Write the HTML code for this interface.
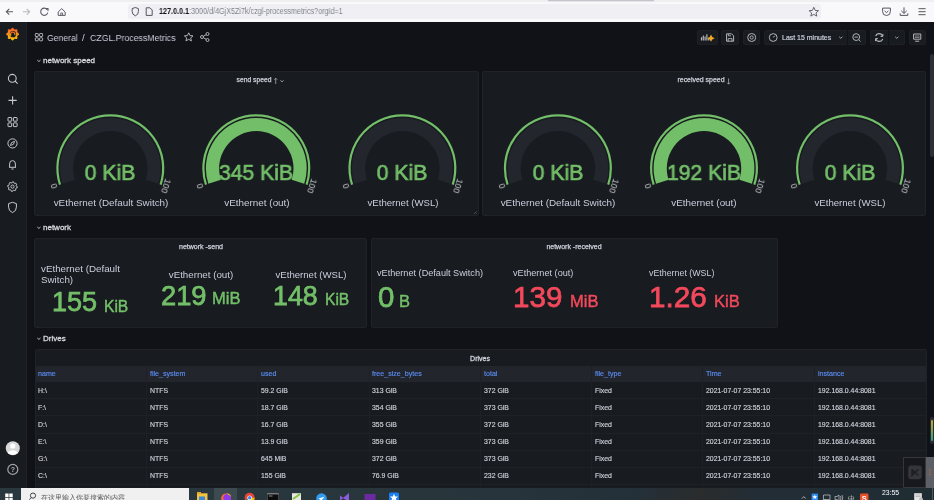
<!DOCTYPE html><html><head><meta charset="utf-8"><style>
html,body{margin:0;padding:0;width:934px;height:500px;overflow:hidden;background:#111217;}
body{position:relative;font-family:"Liberation Sans", sans-serif;}
.t{position:absolute;white-space:nowrap;will-change:transform;}
.r{position:absolute;}
svg.ov{position:absolute;left:0;top:0;}
</style></head><body><div class="r" style="left:0px;top:0px;width:934px;height:22px;background:#f9f9fb;"></div>
<div class="r" style="left:0px;top:0px;width:934px;height:2px;background:#efeff2;"></div>
<div class="r" style="left:548.2px;top:0px;width:106px;height:1px;background:#c4c4cc;box-shadow:0 0.5px 1px #d8d8de;"></div>
<div class="r" style="left:128px;top:3.6px;width:693px;height:15.8px;background:#f0f0f4;border-radius:3px;"></div>
<div class="t" style="left:158.50px;top:6.84px;font-size:8.7px;line-height:8.7px;color:#15141a;font-weight:400;transform:scaleX(0.828);transform-origin:0 0;"><span style="color:#15141a;font-weight:700">127.0.0.1</span><span style="color:#80808c">:3000/d/4GjX5Zi7k/czgl-processmetrics?orgId=1</span></div>
<div class="r" style="left:0px;top:22px;width:934px;height:478px;background:#111217;"></div>
<div class="r" style="left:0px;top:22px;width:26px;height:478px;background:#181b1f;"></div>
<div class="r" style="left:26px;top:22px;width:0.8px;height:478px;background:#202226;"></div>
<div class="t" style="left:-587.20px;width:1200px;text-align:center;top:466.47px;font-size:7px;line-height:7px;color:#b0b1b8;font-weight:700;">?</div>
<div class="t" style="left:47.30px;top:32.69px;font-size:9.7px;line-height:9.7px;color:#ccccdc;font-weight:400;transform:scaleX(0.89);transform-origin:0 0;">General</div>
<div class="t" style="left:82.30px;top:32.69px;font-size:9.7px;line-height:9.7px;color:#ccccdc;font-weight:400;">/</div>
<div class="t" style="left:90.00px;top:32.69px;font-size:9.7px;line-height:9.7px;color:#ccccdc;font-weight:400;transform:scaleX(0.902);transform-origin:0 0;">CZGL.ProcessMetrics</div>
<div class="r" style="left:697px;top:29.8px;width:20.600000000000023px;height:15.400000000000002px;background:#181b1f;border:1px solid #1d2025;box-sizing:border-box;border-radius:2px;"></div>
<div class="r" style="left:721.2px;top:29.8px;width:17.59999999999991px;height:15.400000000000002px;background:#181b1f;border:1px solid #1d2025;box-sizing:border-box;border-radius:2px;"></div>
<div class="r" style="left:743px;top:29.8px;width:17.399999999999977px;height:15.400000000000002px;background:#181b1f;border:1px solid #1d2025;box-sizing:border-box;border-radius:2px;"></div>
<div class="r" style="left:764.2px;top:29.8px;width:101.59999999999991px;height:15.400000000000002px;background:#181b1f;border:1px solid #1d2025;box-sizing:border-box;border-radius:2px;"></div>
<div class="r" style="left:870.2px;top:29.8px;width:34.69999999999993px;height:15.400000000000002px;background:#181b1f;border:1px solid #1d2025;box-sizing:border-box;border-radius:2px;"></div>
<div class="r" style="left:908.6px;top:29.8px;width:17.100000000000023px;height:15.400000000000002px;background:#181b1f;border:1px solid #1d2025;box-sizing:border-box;border-radius:2px;"></div>
<div class="r" style="left:847.3px;top:29.8px;width:0.8px;height:15.4px;background:#111217;"></div>
<div class="r" style="left:888.4px;top:29.8px;width:0.8px;height:15.4px;background:#111217;"></div>
<div class="t" style="left:782.00px;top:34.49px;font-size:6.98px;line-height:6.98px;color:#ccccdc;font-weight:400;-webkit-text-stroke:0.2px #ccccdc;">Last 15 minutes</div>
<div class="r" style="left:929.8px;top:54.2px;width:4.2px;height:103px;background:#2d2f34;border-radius:2px;"></div>
<div class="t" style="left:42.50px;top:56.93px;font-size:8.0px;line-height:8.0px;color:#d8d9e0;font-weight:400;-webkit-text-stroke:0.3px #d8d9e0;">network speed</div>
<div class="t" style="left:42.50px;top:223.83px;font-size:8.0px;line-height:8.0px;color:#d8d9e0;font-weight:400;-webkit-text-stroke:0.3px #d8d9e0;">network</div>
<div class="t" style="left:42.50px;top:334.83px;font-size:8.0px;line-height:8.0px;color:#d8d9e0;font-weight:400;-webkit-text-stroke:0.3px #d8d9e0;">Drives</div>
<div class="r" style="left:34.3px;top:71px;width:444.8px;height:144.7px;background:#181b1f;border:1px solid #202226;box-sizing:border-box;border-radius:2px;"></div>
<div class="r" style="left:482.2px;top:71px;width:444px;height:144.7px;background:#181b1f;border:1px solid #202226;box-sizing:border-box;border-radius:2px;"></div>
<div class="t" style="left:-346.40px;width:1200px;text-align:center;top:77.29px;font-size:6.75px;line-height:6.75px;color:#d0d0dc;font-weight:400;-webkit-text-stroke:0.25px #d0d0dc;">send speed</div>
<div class="t" style="left:101.30px;width:1200px;text-align:center;top:77.12px;font-size:6.95px;line-height:6.95px;color:#d0d0dc;font-weight:400;-webkit-text-stroke:0.25px #d0d0dc;">received speed</div>
<div class="t" style="left:-489.70px;width:1200px;text-align:center;top:162.01px;font-size:22.2px;line-height:22.2px;color:#73bf69;font-weight:400;-webkit-text-stroke:0.7px #73bf69;transform:scaleX(0.955);">0 KiB</div>
<div class="t" style="left:-489.50px;width:1200px;text-align:center;top:197.64px;font-size:9.88px;line-height:9.88px;color:#ccccdc;font-weight:400;">vEthernet (Default Switch)</div>
<div class="t" style="left:34.38px;top:181.47px;width:40px;height:10px;line-height:10px;text-align:center;font-size:8.8px;color:#c4c5cc;transform:rotate(-108deg);">0</div>
<div class="t" style="left:146.22px;top:181.47px;width:40px;height:10px;line-height:10px;text-align:center;font-size:8.8px;color:#c4c5cc;transform:rotate(108deg);">100</div>
<div class="t" style="left:-343.70px;width:1200px;text-align:center;top:162.01px;font-size:22.2px;line-height:22.2px;color:#73bf69;font-weight:400;-webkit-text-stroke:0.7px #73bf69;transform:scaleX(0.955);">345 KiB</div>
<div class="t" style="left:-343.50px;width:1200px;text-align:center;top:197.64px;font-size:9.88px;line-height:9.88px;color:#ccccdc;font-weight:400;">vEthernet (out)</div>
<div class="t" style="left:180.38px;top:181.47px;width:40px;height:10px;line-height:10px;text-align:center;font-size:8.8px;color:#c4c5cc;transform:rotate(-108deg);">0</div>
<div class="t" style="left:292.22px;top:181.47px;width:40px;height:10px;line-height:10px;text-align:center;font-size:8.8px;color:#c4c5cc;transform:rotate(108deg);">100</div>
<div class="t" style="left:-197.60px;width:1200px;text-align:center;top:162.01px;font-size:22.2px;line-height:22.2px;color:#73bf69;font-weight:400;-webkit-text-stroke:0.7px #73bf69;transform:scaleX(0.955);">0 KiB</div>
<div class="t" style="left:-197.40px;width:1200px;text-align:center;top:197.87px;font-size:9.6px;line-height:9.6px;color:#ccccdc;font-weight:400;">vEthernet (WSL)</div>
<div class="t" style="left:326.48px;top:181.47px;width:40px;height:10px;line-height:10px;text-align:center;font-size:8.8px;color:#c4c5cc;transform:rotate(-108deg);">0</div>
<div class="t" style="left:438.32px;top:181.47px;width:40px;height:10px;line-height:10px;text-align:center;font-size:8.8px;color:#c4c5cc;transform:rotate(108deg);">100</div>
<div class="t" style="left:-42.10px;width:1200px;text-align:center;top:162.01px;font-size:22.2px;line-height:22.2px;color:#73bf69;font-weight:400;-webkit-text-stroke:0.7px #73bf69;transform:scaleX(0.955);">0 KiB</div>
<div class="t" style="left:-41.90px;width:1200px;text-align:center;top:197.64px;font-size:9.88px;line-height:9.88px;color:#ccccdc;font-weight:400;">vEthernet (Default Switch)</div>
<div class="t" style="left:481.98px;top:181.47px;width:40px;height:10px;line-height:10px;text-align:center;font-size:8.8px;color:#c4c5cc;transform:rotate(-108deg);">0</div>
<div class="t" style="left:593.82px;top:181.47px;width:40px;height:10px;line-height:10px;text-align:center;font-size:8.8px;color:#c4c5cc;transform:rotate(108deg);">100</div>
<div class="t" style="left:104.00px;width:1200px;text-align:center;top:162.01px;font-size:22.2px;line-height:22.2px;color:#73bf69;font-weight:400;-webkit-text-stroke:0.7px #73bf69;transform:scaleX(0.955);">192 KiB</div>
<div class="t" style="left:104.20px;width:1200px;text-align:center;top:197.64px;font-size:9.88px;line-height:9.88px;color:#ccccdc;font-weight:400;">vEthernet (out)</div>
<div class="t" style="left:628.08px;top:181.47px;width:40px;height:10px;line-height:10px;text-align:center;font-size:8.8px;color:#c4c5cc;transform:rotate(-108deg);">0</div>
<div class="t" style="left:739.92px;top:181.47px;width:40px;height:10px;line-height:10px;text-align:center;font-size:8.8px;color:#c4c5cc;transform:rotate(108deg);">100</div>
<div class="t" style="left:250.00px;width:1200px;text-align:center;top:162.01px;font-size:22.2px;line-height:22.2px;color:#73bf69;font-weight:400;-webkit-text-stroke:0.7px #73bf69;transform:scaleX(0.955);">0 KiB</div>
<div class="t" style="left:250.20px;width:1200px;text-align:center;top:197.87px;font-size:9.6px;line-height:9.6px;color:#ccccdc;font-weight:400;">vEthernet (WSL)</div>
<div class="t" style="left:774.08px;top:181.47px;width:40px;height:10px;line-height:10px;text-align:center;font-size:8.8px;color:#c4c5cc;transform:rotate(-108deg);">0</div>
<div class="t" style="left:885.92px;top:181.47px;width:40px;height:10px;line-height:10px;text-align:center;font-size:8.8px;color:#c4c5cc;transform:rotate(108deg);">100</div>
<div class="r" style="left:34.3px;top:237.8px;width:332.5px;height:89.8px;background:#181b1f;border:1px solid #202226;box-sizing:border-box;border-radius:2px;"></div>
<div class="r" style="left:370.6px;top:237.8px;width:407.6px;height:89.8px;background:#181b1f;border:1px solid #202226;box-sizing:border-box;border-radius:2px;"></div>
<div class="t" style="left:-399.50px;width:1200px;text-align:center;top:243.37px;font-size:7.0px;line-height:7.0px;color:#d0d0dc;font-weight:400;-webkit-text-stroke:0.25px #d0d0dc;">network -send</div>
<div class="t" style="left:-26.20px;width:1200px;text-align:center;top:243.37px;font-size:7.0px;line-height:7.0px;color:#d0d0dc;font-weight:400;-webkit-text-stroke:0.25px #d0d0dc;">network -received</div>
<div class="t" style="left:40.80px;top:263.80px;font-size:9.8px;line-height:9.8px;color:#ccccdc;font-weight:400;">vEthernet (Default</div>
<div class="t" style="left:40.80px;top:275.10px;font-size:9.8px;line-height:9.8px;color:#ccccdc;font-weight:400;">Switch)</div>
<div class="t" style="left:51.90px;top:289.04px;font-size:27px;line-height:27px;color:#73bf69;font-weight:400;-webkit-text-stroke:0.75px #73bf69;">155</div>
<div class="t" style="left:103.60px;top:298.69px;font-size:15.6px;line-height:15.6px;color:#73bf69;font-weight:400;-webkit-text-stroke:0.45px #73bf69;">KiB</div>
<div class="t" style="left:-399.40px;width:1200px;text-align:center;top:269.95px;font-size:9.75px;line-height:9.75px;color:#ccccdc;font-weight:400;">vEthernet (out)</div>
<div class="t" style="left:161.00px;top:282.49px;font-size:27.3px;line-height:27.3px;color:#73bf69;font-weight:400;-webkit-text-stroke:0.75px #73bf69;">219</div>
<div class="t" style="left:211.70px;top:291.29px;font-size:16.55px;line-height:16.55px;color:#73bf69;font-weight:400;-webkit-text-stroke:0.45px #73bf69;">MiB</div>
<div class="t" style="left:-288.60px;width:1200px;text-align:center;top:270.07px;font-size:9.6px;line-height:9.6px;color:#ccccdc;font-weight:400;">vEthernet (WSL)</div>
<div class="t" style="left:273.40px;top:282.91px;font-size:26.8px;line-height:26.8px;color:#73bf69;font-weight:400;-webkit-text-stroke:0.75px #73bf69;">148</div>
<div class="t" style="left:324.80px;top:292.09px;font-size:15.6px;line-height:15.6px;color:#73bf69;font-weight:400;-webkit-text-stroke:0.45px #73bf69;">KiB</div>
<div class="t" style="left:377.00px;top:268.87px;font-size:9.13px;line-height:9.13px;color:#ccccdc;font-weight:400;">vEthernet (Default Switch)</div>
<div class="t" style="left:378.20px;top:282.11px;font-size:29.4px;line-height:29.4px;color:#73bf69;font-weight:400;-webkit-text-stroke:0.75px #73bf69;">0</div>
<div class="t" style="left:399.40px;top:293.03px;font-size:16.5px;line-height:16.5px;color:#73bf69;font-weight:400;-webkit-text-stroke:0.45px #73bf69;">B</div>
<div class="t" style="left:513.00px;top:268.87px;font-size:9.13px;line-height:9.13px;color:#ccccdc;font-weight:400;">vEthernet (out)</div>
<div class="t" style="left:513.00px;top:281.94px;font-size:29.6px;line-height:29.6px;color:#f2495c;font-weight:400;-webkit-text-stroke:0.75px #f2495c;">139</div>
<div class="t" style="left:569.80px;top:293.03px;font-size:16.5px;line-height:16.5px;color:#f2495c;font-weight:400;-webkit-text-stroke:0.45px #f2495c;">MiB</div>
<div class="t" style="left:649.00px;top:269.11px;font-size:8.85px;line-height:8.85px;color:#ccccdc;font-weight:400;">vEthernet (WSL)</div>
<div class="t" style="left:649.20px;top:281.86px;font-size:29.7px;line-height:29.7px;color:#f2495c;font-weight:400;-webkit-text-stroke:0.75px #f2495c;">1.26</div>
<div class="t" style="left:713.80px;top:293.03px;font-size:16.5px;line-height:16.5px;color:#f2495c;font-weight:400;-webkit-text-stroke:0.45px #f2495c;">KiB</div>
<div class="r" style="left:34.5px;top:349.2px;width:892px;height:150px;background:#181b1f;border:1px solid #202226;box-sizing:border-box;border-radius:2px;"></div>
<div class="t" style="left:-119.80px;width:1200px;text-align:center;top:354.97px;font-size:7.0px;line-height:7.0px;color:#d0d0dc;font-weight:400;-webkit-text-stroke:0.3px #d0d0dc;">Drives</div>
<div class="r" style="left:35.5px;top:366px;width:890px;height:16.2px;background:#22252c;"></div>
<div class="r" style="left:145.9px;top:366px;width:0.8px;height:121px;background:#1e2025;"></div>
<div class="r" style="left:257.2px;top:366px;width:0.8px;height:121px;background:#1e2025;"></div>
<div class="r" style="left:368.5px;top:366px;width:0.8px;height:121px;background:#1e2025;"></div>
<div class="r" style="left:479.8px;top:366px;width:0.8px;height:121px;background:#1e2025;"></div>
<div class="r" style="left:591.1px;top:366px;width:0.8px;height:121px;background:#1e2025;"></div>
<div class="r" style="left:702.4px;top:366px;width:0.8px;height:121px;background:#1e2025;"></div>
<div class="r" style="left:813.7px;top:366px;width:0.8px;height:121px;background:#1e2025;"></div>
<div class="t" style="left:38.40px;top:371.19px;font-size:7.1px;line-height:7.1px;color:#5b8cf0;font-weight:400;-webkit-text-stroke:0.15px #5b8cf0;">name</div>
<div class="t" style="left:149.70px;top:371.19px;font-size:7.1px;line-height:7.1px;color:#5b8cf0;font-weight:400;-webkit-text-stroke:0.15px #5b8cf0;">file_system</div>
<div class="t" style="left:261.00px;top:371.19px;font-size:7.1px;line-height:7.1px;color:#5b8cf0;font-weight:400;-webkit-text-stroke:0.15px #5b8cf0;">used</div>
<div class="t" style="left:372.30px;top:371.19px;font-size:7.1px;line-height:7.1px;color:#5b8cf0;font-weight:400;-webkit-text-stroke:0.15px #5b8cf0;">free_size_bytes</div>
<div class="t" style="left:483.60px;top:371.19px;font-size:7.1px;line-height:7.1px;color:#5b8cf0;font-weight:400;-webkit-text-stroke:0.15px #5b8cf0;">total</div>
<div class="t" style="left:594.90px;top:371.19px;font-size:7.1px;line-height:7.1px;color:#5b8cf0;font-weight:400;-webkit-text-stroke:0.15px #5b8cf0;">file_type</div>
<div class="t" style="left:706.20px;top:371.19px;font-size:7.1px;line-height:7.1px;color:#5b8cf0;font-weight:400;-webkit-text-stroke:0.15px #5b8cf0;">Time</div>
<div class="t" style="left:817.50px;top:371.19px;font-size:7.1px;line-height:7.1px;color:#5b8cf0;font-weight:400;-webkit-text-stroke:0.15px #5b8cf0;">instance</div>
<div class="r" style="left:35.5px;top:398.3px;width:890px;height:0.8px;background:#1f2126;"></div>
<div class="t" style="left:38.40px;top:387.76px;font-size:6.9px;line-height:6.9px;color:#d0d0dc;font-weight:400;-webkit-text-stroke:0.15px #d0d0dc;">H:\</div>
<div class="t" style="left:149.70px;top:387.76px;font-size:6.9px;line-height:6.9px;color:#d0d0dc;font-weight:400;-webkit-text-stroke:0.15px #d0d0dc;">NTFS</div>
<div class="t" style="left:261.00px;top:387.76px;font-size:6.9px;line-height:6.9px;color:#d0d0dc;font-weight:400;-webkit-text-stroke:0.15px #d0d0dc;">59.2 GiB</div>
<div class="t" style="left:372.30px;top:387.76px;font-size:6.9px;line-height:6.9px;color:#d0d0dc;font-weight:400;-webkit-text-stroke:0.15px #d0d0dc;">313 GiB</div>
<div class="t" style="left:483.60px;top:387.76px;font-size:6.9px;line-height:6.9px;color:#d0d0dc;font-weight:400;-webkit-text-stroke:0.15px #d0d0dc;">372 GiB</div>
<div class="t" style="left:594.90px;top:387.76px;font-size:6.9px;line-height:6.9px;color:#d0d0dc;font-weight:400;-webkit-text-stroke:0.15px #d0d0dc;">Fixed</div>
<div class="t" style="left:706.20px;top:387.76px;font-size:6.9px;line-height:6.9px;color:#d0d0dc;font-weight:400;-webkit-text-stroke:0.15px #d0d0dc;">2021-07-07 23:55:10</div>
<div class="t" style="left:817.50px;top:387.76px;font-size:6.9px;line-height:6.9px;color:#d0d0dc;font-weight:400;-webkit-text-stroke:0.15px #d0d0dc;">192.168.0.44:8081</div>
<div class="r" style="left:35.5px;top:415.40000000000003px;width:890px;height:0.8px;background:#1f2126;"></div>
<div class="t" style="left:38.40px;top:404.86px;font-size:6.9px;line-height:6.9px;color:#d0d0dc;font-weight:400;-webkit-text-stroke:0.15px #d0d0dc;">F:\</div>
<div class="t" style="left:149.70px;top:404.86px;font-size:6.9px;line-height:6.9px;color:#d0d0dc;font-weight:400;-webkit-text-stroke:0.15px #d0d0dc;">NTFS</div>
<div class="t" style="left:261.00px;top:404.86px;font-size:6.9px;line-height:6.9px;color:#d0d0dc;font-weight:400;-webkit-text-stroke:0.15px #d0d0dc;">18.7 GiB</div>
<div class="t" style="left:372.30px;top:404.86px;font-size:6.9px;line-height:6.9px;color:#d0d0dc;font-weight:400;-webkit-text-stroke:0.15px #d0d0dc;">354 GiB</div>
<div class="t" style="left:483.60px;top:404.86px;font-size:6.9px;line-height:6.9px;color:#d0d0dc;font-weight:400;-webkit-text-stroke:0.15px #d0d0dc;">373 GiB</div>
<div class="t" style="left:594.90px;top:404.86px;font-size:6.9px;line-height:6.9px;color:#d0d0dc;font-weight:400;-webkit-text-stroke:0.15px #d0d0dc;">Fixed</div>
<div class="t" style="left:706.20px;top:404.86px;font-size:6.9px;line-height:6.9px;color:#d0d0dc;font-weight:400;-webkit-text-stroke:0.15px #d0d0dc;">2021-07-07 23:55:10</div>
<div class="t" style="left:817.50px;top:404.86px;font-size:6.9px;line-height:6.9px;color:#d0d0dc;font-weight:400;-webkit-text-stroke:0.15px #d0d0dc;">192.168.0.44:8081</div>
<div class="r" style="left:35.5px;top:432.5px;width:890px;height:0.8px;background:#1f2126;"></div>
<div class="t" style="left:38.40px;top:421.96px;font-size:6.9px;line-height:6.9px;color:#d0d0dc;font-weight:400;-webkit-text-stroke:0.15px #d0d0dc;">D:\</div>
<div class="t" style="left:149.70px;top:421.96px;font-size:6.9px;line-height:6.9px;color:#d0d0dc;font-weight:400;-webkit-text-stroke:0.15px #d0d0dc;">NTFS</div>
<div class="t" style="left:261.00px;top:421.96px;font-size:6.9px;line-height:6.9px;color:#d0d0dc;font-weight:400;-webkit-text-stroke:0.15px #d0d0dc;">16.7 GiB</div>
<div class="t" style="left:372.30px;top:421.96px;font-size:6.9px;line-height:6.9px;color:#d0d0dc;font-weight:400;-webkit-text-stroke:0.15px #d0d0dc;">355 GiB</div>
<div class="t" style="left:483.60px;top:421.96px;font-size:6.9px;line-height:6.9px;color:#d0d0dc;font-weight:400;-webkit-text-stroke:0.15px #d0d0dc;">372 GiB</div>
<div class="t" style="left:594.90px;top:421.96px;font-size:6.9px;line-height:6.9px;color:#d0d0dc;font-weight:400;-webkit-text-stroke:0.15px #d0d0dc;">Fixed</div>
<div class="t" style="left:706.20px;top:421.96px;font-size:6.9px;line-height:6.9px;color:#d0d0dc;font-weight:400;-webkit-text-stroke:0.15px #d0d0dc;">2021-07-07 23:55:10</div>
<div class="t" style="left:817.50px;top:421.96px;font-size:6.9px;line-height:6.9px;color:#d0d0dc;font-weight:400;-webkit-text-stroke:0.15px #d0d0dc;">192.168.0.44:8081</div>
<div class="r" style="left:35.5px;top:449.6px;width:890px;height:0.8px;background:#1f2126;"></div>
<div class="t" style="left:38.40px;top:439.06px;font-size:6.9px;line-height:6.9px;color:#d0d0dc;font-weight:400;-webkit-text-stroke:0.15px #d0d0dc;">E:\</div>
<div class="t" style="left:149.70px;top:439.06px;font-size:6.9px;line-height:6.9px;color:#d0d0dc;font-weight:400;-webkit-text-stroke:0.15px #d0d0dc;">NTFS</div>
<div class="t" style="left:261.00px;top:439.06px;font-size:6.9px;line-height:6.9px;color:#d0d0dc;font-weight:400;-webkit-text-stroke:0.15px #d0d0dc;">13.9 GiB</div>
<div class="t" style="left:372.30px;top:439.06px;font-size:6.9px;line-height:6.9px;color:#d0d0dc;font-weight:400;-webkit-text-stroke:0.15px #d0d0dc;">359 GiB</div>
<div class="t" style="left:483.60px;top:439.06px;font-size:6.9px;line-height:6.9px;color:#d0d0dc;font-weight:400;-webkit-text-stroke:0.15px #d0d0dc;">373 GiB</div>
<div class="t" style="left:594.90px;top:439.06px;font-size:6.9px;line-height:6.9px;color:#d0d0dc;font-weight:400;-webkit-text-stroke:0.15px #d0d0dc;">Fixed</div>
<div class="t" style="left:706.20px;top:439.06px;font-size:6.9px;line-height:6.9px;color:#d0d0dc;font-weight:400;-webkit-text-stroke:0.15px #d0d0dc;">2021-07-07 23:55:10</div>
<div class="t" style="left:817.50px;top:439.06px;font-size:6.9px;line-height:6.9px;color:#d0d0dc;font-weight:400;-webkit-text-stroke:0.15px #d0d0dc;">192.168.0.44:8081</div>
<div class="r" style="left:35.5px;top:466.7px;width:890px;height:0.8px;background:#1f2126;"></div>
<div class="t" style="left:38.40px;top:456.16px;font-size:6.9px;line-height:6.9px;color:#d0d0dc;font-weight:400;-webkit-text-stroke:0.15px #d0d0dc;">G:\</div>
<div class="t" style="left:149.70px;top:456.16px;font-size:6.9px;line-height:6.9px;color:#d0d0dc;font-weight:400;-webkit-text-stroke:0.15px #d0d0dc;">NTFS</div>
<div class="t" style="left:261.00px;top:456.16px;font-size:6.9px;line-height:6.9px;color:#d0d0dc;font-weight:400;-webkit-text-stroke:0.15px #d0d0dc;">645 MiB</div>
<div class="t" style="left:372.30px;top:456.16px;font-size:6.9px;line-height:6.9px;color:#d0d0dc;font-weight:400;-webkit-text-stroke:0.15px #d0d0dc;">372 GiB</div>
<div class="t" style="left:483.60px;top:456.16px;font-size:6.9px;line-height:6.9px;color:#d0d0dc;font-weight:400;-webkit-text-stroke:0.15px #d0d0dc;">373 GiB</div>
<div class="t" style="left:594.90px;top:456.16px;font-size:6.9px;line-height:6.9px;color:#d0d0dc;font-weight:400;-webkit-text-stroke:0.15px #d0d0dc;">Fixed</div>
<div class="t" style="left:706.20px;top:456.16px;font-size:6.9px;line-height:6.9px;color:#d0d0dc;font-weight:400;-webkit-text-stroke:0.15px #d0d0dc;">2021-07-07 23:55:10</div>
<div class="t" style="left:817.50px;top:456.16px;font-size:6.9px;line-height:6.9px;color:#d0d0dc;font-weight:400;-webkit-text-stroke:0.15px #d0d0dc;">192.168.0.44:8081</div>
<div class="r" style="left:35.5px;top:483.8px;width:890px;height:0.8px;background:#1f2126;"></div>
<div class="t" style="left:38.40px;top:473.26px;font-size:6.9px;line-height:6.9px;color:#d0d0dc;font-weight:400;-webkit-text-stroke:0.15px #d0d0dc;">C:\</div>
<div class="t" style="left:149.70px;top:473.26px;font-size:6.9px;line-height:6.9px;color:#d0d0dc;font-weight:400;-webkit-text-stroke:0.15px #d0d0dc;">NTFS</div>
<div class="t" style="left:261.00px;top:473.26px;font-size:6.9px;line-height:6.9px;color:#d0d0dc;font-weight:400;-webkit-text-stroke:0.15px #d0d0dc;">155 GiB</div>
<div class="t" style="left:372.30px;top:473.26px;font-size:6.9px;line-height:6.9px;color:#d0d0dc;font-weight:400;-webkit-text-stroke:0.15px #d0d0dc;">76.9 GiB</div>
<div class="t" style="left:483.60px;top:473.26px;font-size:6.9px;line-height:6.9px;color:#d0d0dc;font-weight:400;-webkit-text-stroke:0.15px #d0d0dc;">232 GiB</div>
<div class="t" style="left:594.90px;top:473.26px;font-size:6.9px;line-height:6.9px;color:#d0d0dc;font-weight:400;-webkit-text-stroke:0.15px #d0d0dc;">Fixed</div>
<div class="t" style="left:706.20px;top:473.26px;font-size:6.9px;line-height:6.9px;color:#d0d0dc;font-weight:400;-webkit-text-stroke:0.15px #d0d0dc;">2021-07-07 23:55:10</div>
<div class="t" style="left:817.50px;top:473.26px;font-size:6.9px;line-height:6.9px;color:#d0d0dc;font-weight:400;-webkit-text-stroke:0.15px #d0d0dc;">192.168.0.44:8081</div>
<div class="r" style="left:903px;top:457.2px;width:23px;height:30.5px;background:#16181d;border:1px solid #34363c;box-sizing:border-box;"></div>
<div class="r" style="left:926px;top:457.2px;width:8px;height:30.5px;background:#5d5e66;"></div>
<div class="r" style="left:929.7px;top:416.8px;width:4.3px;height:27.1px;background:#2a2d35;border-radius:2px;"></div>
<div class="r" style="left:931.3px;top:420px;width:1.8px;height:21px;background:linear-gradient(#c8a838,#7aa848,#2aa088);border-radius:1px;"></div>
<div class="r" style="left:0px;top:487.5px;width:934px;height:12.5px;background:linear-gradient(90deg,#29373f 0%,#28363c 45%,#243039 68%,#2a2c2c 75%,#232d36 81%,#1f2d33 100%);"></div>
<div class="r" style="left:931.5px;top:487.5px;width:0.6px;height:12.5px;background:#4a5a60;"></div>
<div class="r" style="left:21.2px;top:487.5px;width:167.5px;height:12.5px;background:#f0f0f0;"></div>
<div class="t" style="left:41.00px;top:494.24px;font-size:7.4px;line-height:7.4px;color:#555555;font-weight:400;">在这里输入你要搜索的内容</div>
<div class="r" style="left:214.2px;top:487.5px;width:23.2px;height:12.5px;background:#3d4b51;"></div>
<svg class="ov" width="934" height="500" viewBox="0 0 934 500"><path d="M6.5 11.8 H13 M9.3 8.9 L6.3 11.8 L9.3 14.7" stroke="#5b5b66" stroke-width="1.1" fill="none"/>
<path d="M23 11.8 H29.5 M26.7 8.9 L29.7 11.8 L26.7 14.7" stroke="#b8b8c0" stroke-width="1.1" fill="none"/>
<path d="M47.2 9.6 A3.6 3.6 0 1 0 47.8 12.5" stroke="#5b5b66" stroke-width="1.1" fill="none"/><path d="M45.6 8.6 L48 8.6 L48 11" stroke="#5b5b66" stroke-width="1.1" fill="none"/>
<path d="M58.2 12 L61.7 8.6 L65.2 12 V15.4 H58.2 Z" stroke="#5b5b66" stroke-width="1" fill="none"/><path d="M60.8 15.4 V13 H62.6 V15.4" stroke="#5b5b66" stroke-width="0.9" fill="none"/>
<path d="M132.2 8.6 L135.3 7.5 L138.4 8.6 V11.6 Q138.4 14.6 135.3 15.8 Q132.2 14.6 132.2 11.6 Z" stroke="#55555f" stroke-width="1" fill="none"/>
<path d="M146.2 7.8 H150 L152.2 10 V15.4 H146.2 Z" stroke="#55555f" stroke-width="1" fill="none"/>
<path d="M813.8 7.3 L815.2 10.4 L818.5 10.7 L816 12.9 L816.8 16.1 L813.8 14.4 L810.8 16.1 L811.6 12.9 L809.1 10.7 L812.4 10.4 Z" stroke="#55555f" stroke-width="0.9" fill="none"/>
<path d="M882.6 8.1 H890.4 V11.5 Q890.4 15.5 886.5 15.5 Q882.6 15.5 882.6 11.5 Z" stroke="#55555f" stroke-width="1" fill="none"/><path d="M884.6 10.9 L886.5 12.6 L888.4 10.9" stroke="#55555f" stroke-width="1" fill="none"/>
<path d="M904 7.3 V13.3 M901.3 10.8 L904 13.4 L906.7 10.8 M900.2 13.3 V15.4 H907.8 V13.3" stroke="#55555f" stroke-width="1" fill="none"/>
<path d="M918.5 8.7 H925.6 M918.5 11.7 H925.6 M918.5 14.7 H925.6" stroke="#55555f" stroke-width="1" fill="none"/>
<defs><linearGradient id="glg" x1="0" y1="1" x2="0" y2="0"><stop offset="0" stop-color="#fbc70f"/><stop offset="1" stop-color="#f05a28"/></linearGradient></defs>
<polygon points="17.63,35.66 17.12,36.00 17.28,36.63 17.45,37.38 17.42,38.10 17.10,38.65 16.52,38.93 15.79,38.94 15.06,38.75 14.45,38.64 14.12,39.20 13.71,39.85 13.18,40.33 12.56,40.50 11.96,40.29 11.44,39.78 11.04,39.13 10.70,38.62 10.07,38.78 9.32,38.95 8.60,38.92 8.05,38.60 7.77,38.02 7.76,37.29 7.95,36.56 8.06,35.95 7.50,35.62 6.85,35.21 6.37,34.68 6.20,34.06 6.41,33.46 6.92,32.94 7.57,32.54 8.08,32.20 7.92,31.57 7.75,30.82 7.78,30.10 8.10,29.55 8.68,29.27 9.41,29.26 10.14,29.45 10.75,29.56 11.08,29.00 11.49,28.35 12.02,27.87 12.64,27.70 13.24,27.91 13.76,28.42 14.16,29.07 14.50,29.58 15.13,29.42 15.88,29.25 16.60,29.28 17.15,29.60 17.43,30.18 17.44,30.91 17.25,31.64 17.14,32.25 17.70,32.58 18.35,32.99 18.83,33.52 19.00,34.14 18.79,34.74 18.28,35.26" fill="url(#glg)"/>
<circle cx="13.0" cy="34.2" r="3.1" fill="#181b1f"/><path d="M11.0 35.7 A2.2 2.2 0 1 1 14.8 35.1" stroke="url(#glg)" stroke-width="1.2" fill="none"/><circle cx="13.2" cy="34.6" r="1.0" fill="#181b1f"/>
<circle cx="12.3" cy="78.3" r="3.9" stroke="#c8c9d0" stroke-width="1.1" fill="none"/><path d="M15.1 81.1 L17.6 83.6" stroke="#c8c9d0" stroke-width="1.2"/>
<path d="M12.6 96.3 V104.5 M8.5 100.4 H16.7" stroke="#c8c9d0" stroke-width="1.1"/>
<rect x="8" y="117.5" width="3.7" height="3.7" stroke="#c8c9d0" stroke-width="1" fill="none" rx="0.5"/>
<rect x="8" y="122.9" width="3.7" height="3.7" stroke="#c8c9d0" stroke-width="1" fill="none" rx="0.5"/>
<rect x="13.4" y="117.5" width="3.7" height="3.7" stroke="#c8c9d0" stroke-width="1" fill="none" rx="0.5"/>
<rect x="13.4" y="122.9" width="3.7" height="3.7" stroke="#c8c9d0" stroke-width="1" fill="none" rx="0.5"/>
<circle cx="12.5" cy="143.4" r="4.6" stroke="#c8c9d0" stroke-width="1" fill="none"/><path d="M14.6 141.3 L13.4 144.3 L10.4 145.5 L11.6 142.5 Z" stroke="#c8c9d0" stroke-width="0.9" fill="none"/>
<path d="M9 167.3 H16 M9.6 167.1 V164 Q9.6 160.6 12.5 160.6 Q15.4 160.6 15.4 164 V167.1 M11.4 169 H13.6" stroke="#c8c9d0" stroke-width="1" fill="none"/>
<polygon points="17.30,186.60 17.26,187.23 17.14,187.84 16.01,188.05 15.79,188.50 15.51,188.91 15.89,189.99 15.42,190.41 14.90,190.76 13.95,190.11 13.48,190.27 13.00,190.37 12.50,191.40 11.87,191.36 11.26,191.24 11.05,190.11 10.60,189.89 10.19,189.61 9.11,189.99 8.69,189.52 8.34,189.00 8.99,188.05 8.83,187.58 8.73,187.10 7.70,186.60 7.74,185.97 7.86,185.36 8.99,185.15 9.21,184.70 9.49,184.29 9.11,183.21 9.58,182.79 10.10,182.44 11.05,183.09 11.52,182.93 12.00,182.83 12.50,181.80 13.13,181.84 13.74,181.96 13.95,183.09 14.40,183.31 14.81,183.59 15.89,183.21 16.31,183.68 16.66,184.20 16.01,185.15 16.17,185.62 16.27,186.10" stroke="#c8c9d0" stroke-width="1" fill="none" stroke-linejoin="round"/><circle cx="12.5" cy="186.6" r="1.6" stroke="#c8c9d0" stroke-width="1" fill="none"/>
<path d="M8.6 203.6 L12.5 202.3 L16.4 203.6 V207.2 Q16.4 211.2 12.5 212.6 Q8.6 211.2 8.6 207.2 Z" stroke="#c8c9d0" stroke-width="1" fill="none"/>
<circle cx="12.8" cy="448.2" r="7" fill="#d8d8d8"/><circle cx="12.8" cy="446" r="2.6" fill="#ffffff"/><path d="M7.6 452.6 Q12.8 447.8 18 452.6 Q15.8 455 12.8 455 Q9.8 455 7.6 452.6Z" fill="#ffffff"/>
<circle cx="12.8" cy="469.4" r="5" stroke="#a4a5ac" stroke-width="1.2" fill="none"/>
<rect x="35.3" y="33.5" width="3" height="3" stroke="#c0c1c8" stroke-width="0.9" fill="none" rx="0.6"/>
<rect x="35.3" y="37.8" width="3" height="3" stroke="#c0c1c8" stroke-width="0.9" fill="none" rx="0.6"/>
<rect x="39.599999999999994" y="33.5" width="3" height="3" stroke="#c0c1c8" stroke-width="0.9" fill="none" rx="0.6"/>
<rect x="39.599999999999994" y="37.8" width="3" height="3" stroke="#c0c1c8" stroke-width="0.9" fill="none" rx="0.6"/>
<path d="M188.7 32.8 L190 35.6 L193 35.9 L190.7 37.9 L191.4 40.9 L188.7 39.3 L186 40.9 L186.7 37.9 L184.4 35.9 L187.4 35.6 Z" stroke="#c0c1c8" stroke-width="0.9" fill="none" stroke-linejoin="round"/>
<circle cx="207.5" cy="34" r="1.5" stroke="#c0c1c8" stroke-width="0.9" fill="none"/><circle cx="202" cy="37" r="1.5" stroke="#c0c1c8" stroke-width="0.9" fill="none"/><circle cx="207.5" cy="40" r="1.5" stroke="#c0c1c8" stroke-width="0.9" fill="none"/><path d="M203.4 36.2 L206.1 34.8 M203.4 37.8 L206.1 39.2" stroke="#c0c1c8" stroke-width="0.9"/>
<path d="M701.5 40.6 V37.2 M703.3 40.6 V35.6 M705.1 40.6 V36.6 M706.9 40.6 V34.2 M708.7 40.6 V37.8" stroke="#b4b5bc" stroke-width="1.2"/>
<path d="M711 34.6 L712.3 37 L714.7 38.2 L712.3 39.4 L711 41.8 L709.7 39.4 L707.3 38.2 L709.7 37 Z" fill="#f5a623"/>
<path d="M726.6 33.8 H731.6 L733.6 35.8 V41.2 H726.6 Z" stroke="#b4b5bc" stroke-width="1" fill="none" stroke-linejoin="round"/><path d="M728.2 41 V38.6 H732 V41 M728.4 34 V35.8 H731" stroke="#b4b5bc" stroke-width="0.9" fill="none"/>
<circle cx="751.7" cy="37.5" r="4" stroke="#b4b5bc" stroke-width="1" fill="none"/><circle cx="751.7" cy="37.5" r="1.6" stroke="#b4b5bc" stroke-width="1" fill="none"/>
<circle cx="773.2" cy="37.5" r="3.9" stroke="#b4b5bc" stroke-width="1" fill="none"/><path d="M773.2 37.5 L774.9 35.6" stroke="#b4b5bc" stroke-width="1"/>
<path d="M839.2 36.8 L840.8 38.3 L842.4 36.8" stroke="#b4b5bc" stroke-width="0.9" fill="none"/>
<circle cx="856.2" cy="37.1" r="3.4" stroke="#b4b5bc" stroke-width="1" fill="none"/><path d="M854.5 37.1 H857.9 M858.7 39.6 L860.5 41.4" stroke="#b4b5bc" stroke-width="1"/>
<path d="M875.7 36.2 A3.6 3.6 0 0 1 882.6 36.2 M882.7 38.8 A3.6 3.6 0 0 1 875.8 38.8" stroke="#b4b5bc" stroke-width="1.1" fill="none"/><path d="M882.9 33.9 V36.4 H880.5 M875.5 41.1 V38.6 H877.9" stroke="#b4b5bc" stroke-width="1" fill="none"/>
<path d="M895.2 36.8 L896.8 38.3 L898.4 36.8" stroke="#b4b5bc" stroke-width="0.9" fill="none"/>
<path d="M913.6 34 H920.8 V39.2 H913.6 Z M915.2 41.2 H919.2" stroke="#b4b5bc" stroke-width="1" fill="none"/><path d="M914.8 36 H919.6 M914.8 37.4 H919.6" stroke="#b4b5bc" stroke-width="0.7"/>
<path d="M37.3 60.1 L38.9 61.5 L40.5 60.1" stroke="#ccccdc" stroke-width="0.9" fill="none"/>
<path d="M37.3 227.0 L38.9 228.4 L40.5 227.0" stroke="#ccccdc" stroke-width="0.9" fill="none"/>
<path d="M37.3 338.0 L38.9 339.40000000000003 L40.5 338.0" stroke="#ccccdc" stroke-width="0.9" fill="none"/>
<path d="M275.7 78.4 V84 M274.3 79.7 L275.7 78.2 L277.1 79.7" stroke="#bdbec5" stroke-width="0.7" fill="none"/>
<path d="M280.4 80.4 L282 81.8 L283.6 80.4" stroke="#bdbec5" stroke-width="0.8" fill="none"/>
<path d="M728.6 78.4 V84 M727.2 82.7 L728.6 84.2 L730 82.7" stroke="#bdbec5" stroke-width="0.7" fill="none"/>
<path d="M68.64 181.83 A43.8 43.8 0 1 1 151.96 181.83" stroke="#23262d" stroke-width="13.2" fill="none"/>
<path d="M59.99 184.65 A52.9 52.9 0 1 1 160.61 184.65" stroke="#73bf69" stroke-width="2.2" fill="none"/>
<path d="M214.64 181.83 A43.8 43.8 0 1 1 297.96 181.83" stroke="#73bf69" stroke-width="13.2" fill="none"/>
<path d="M205.99 184.65 A52.9 52.9 0 1 1 306.61 184.65" stroke="#73bf69" stroke-width="2.2" fill="none"/>
<path d="M360.74 181.83 A43.8 43.8 0 1 1 444.06 181.83" stroke="#23262d" stroke-width="13.2" fill="none"/>
<path d="M352.09 184.65 A52.9 52.9 0 1 1 452.71 184.65" stroke="#73bf69" stroke-width="2.2" fill="none"/>
<path d="M516.24 181.83 A43.8 43.8 0 1 1 599.56 181.83" stroke="#23262d" stroke-width="13.2" fill="none"/>
<path d="M507.59 184.65 A52.9 52.9 0 1 1 608.21 184.65" stroke="#73bf69" stroke-width="2.2" fill="none"/>
<path d="M662.34 181.83 A43.8 43.8 0 1 1 745.66 181.83" stroke="#73bf69" stroke-width="13.2" fill="none"/>
<path d="M653.69 184.65 A52.9 52.9 0 1 1 754.31 184.65" stroke="#73bf69" stroke-width="2.2" fill="none"/>
<path d="M808.34 181.83 A43.8 43.8 0 1 1 891.66 181.83" stroke="#23262d" stroke-width="13.2" fill="none"/>
<path d="M799.69 184.65 A52.9 52.9 0 1 1 900.31 184.65" stroke="#73bf69" stroke-width="2.2" fill="none"/>
<path d="M476.5 211.5 L474 214 M476.5 213.5 L476 214" stroke="#5a5b62" stroke-width="0.8"/>
<rect x="908.2" y="465.6" width="13.6" height="13.6" rx="3" fill="#34363c"/><path d="M912 469.2 L918.4 475.6 M912 469.2 V475.6 L918.4 469.2" stroke="#1e2025" stroke-width="1.4" fill="none"/><path d="M912 469.2 V475.6 L916.5 472.4 Z" fill="#1e2025"/>
<circle cx="929.8" cy="469.5" r="0.6" fill="#d8773a"/><circle cx="929.8" cy="472" r="0.6" fill="#d8773a"/><circle cx="929.8" cy="474.5" r="0.6" fill="#d8773a"/>
<path d="M5.2 493.6 H8.6 V497 H5.2 Z M9.3 493.6 H12.7 V497 H9.3 Z M5.2 497.7 H8.6 V501 H5.2 Z M9.3 497.7 H12.7 V501 H9.3 Z" fill="#ffffff"/>
<circle cx="33" cy="495.6" r="2.6" stroke="#333" stroke-width="0.9" fill="none"/><path d="M31.2 497.6 L29.4 499.6" stroke="#333" stroke-width="0.9"/>
<g transform="translate(0,1)">
<rect x="197" y="492.3" width="10.5" height="8" fill="#f3c341"/><rect x="197" y="491" width="4" height="2" fill="#e6a82a"/><rect x="199" y="495.5" width="6" height="5" fill="#3a8ad8"/>
<circle cx="226.2" cy="497.6" r="4.9" fill="#8f3bea"/><path d="M221.2 496.5 Q221.4 502.6 226.6 502.6 Q230.6 502.4 231.2 499 Q229 501.2 226.2 500.6 Q222.8 499.6 223.4 496 Q224.2 493.2 227.6 492.8 Q223 491.6 221.2 496.5 Z" fill="#ff6b2a"/><path d="M227 492.2 Q230.5 492.6 231.2 496 Q229.6 493.8 227.6 493.6 Z" fill="#ffc12e"/>
<circle cx="249.6" cy="496.8" r="5" fill="#e94435"/><path d="M249.6 496.8 L245.2 499.2 A5 5 0 0 0 252 501.2 Z" fill="#1aa260"/><path d="M249.6 496.8 L254.6 496.8 A5 5 0 0 1 252 501.2 Z" fill="#fbbc05"/><circle cx="249.6" cy="496.8" r="2.3" fill="#fff"/><circle cx="249.6" cy="496.8" r="1.7" fill="#4285f4"/>
<rect x="267.5" y="492.2" width="11" height="9" fill="#0c0c0c" stroke="#6a6a6a" stroke-width="0.5"/><rect x="267.5" y="492.2" width="11" height="1.2" fill="#8a8a8a"/><path d="M269 495 H272.5" stroke="#ddd" stroke-width="0.6"/>
<rect x="292" y="492.2" width="9" height="8" fill="#e8e8e0"/><path d="M293 498 L300 493" stroke="#8ac43f" stroke-width="2"/>
<circle cx="321.5" cy="497.5" r="5.3" fill="#2f9cf0"/><path d="M318.5 497.5 L324.5 495.8 L321.5 499.5" fill="#fff"/>
<path d="M340 494.5 L343.5 497 L340 499.5 Z M343 497 L349 492 V501 L343 497" fill="#8a5cd9"/>
<rect x="364.5" y="493" width="11" height="8" fill="#6b2aa0"/>
<rect x="389" y="491.5" width="10" height="9" rx="1.5" fill="#1a7ff2"/><path d="M394 492.8 L395.2 495.5 L398 495.6 L395.9 497.4 L396.6 500 L394 498.6 L391.4 500 L392.1 497.4 L390 495.6 L392.8 495.5 Z" fill="#fff"/>
</g>
<path d="M801.8 498.6 L803.8 496.6 L805.8 498.6" stroke="#d0d0d0" stroke-width="0.8" fill="none"/>
<rect x="811.6" y="493.6" width="6.4" height="7" fill="#2b8af0"/><path d="M814.8 494.4 L815.5 496.3 L817.4 496.3 L815.9 497.4 L816.4 499.2 L814.8 498.1 L813.2 499.2 L813.7 497.4 L812.2 496.3 L814.1 496.3 Z" fill="#fff"/>
<path d="M823.5 495 H830 V499.5 H823.5 Z M822.5 500 H826" stroke="#c8c8c8" stroke-width="0.7" fill="none"/>
<path d="M835 496.5 H837 L839 495 V501 L837 499.5 H835 Z M840.5 496 Q841.5 498 840.5 500 M842 495 Q843.5 498 842 501" stroke="#c8c8c8" stroke-width="0.7" fill="none"/>
<text x="847.5" y="501" font-size="7" fill="#c8c8c8" font-family="Liberation Sans, sans-serif">中</text>
<rect x="860" y="493.5" width="8.5" height="8" rx="1.2" fill="#e8502a"/><text x="864.25" y="500.8" font-size="7.5" font-weight="700" text-anchor="middle" fill="#fff" font-family="Liberation Sans, sans-serif">S</text>
<text x="882" y="494.6" font-size="6.8" fill="#ffffff" font-family="Liberation Sans, sans-serif">23:55</text>
<rect x="914.2" y="493.2" width="7.6" height="7" fill="#e6e6e6"/><path d="M915.5 495 H920.5 M915.5 496.6 H920.5" stroke="#888" stroke-width="0.5"/><circle cx="921" cy="499.5" r="2" fill="#bbb"/></svg></body></html>
